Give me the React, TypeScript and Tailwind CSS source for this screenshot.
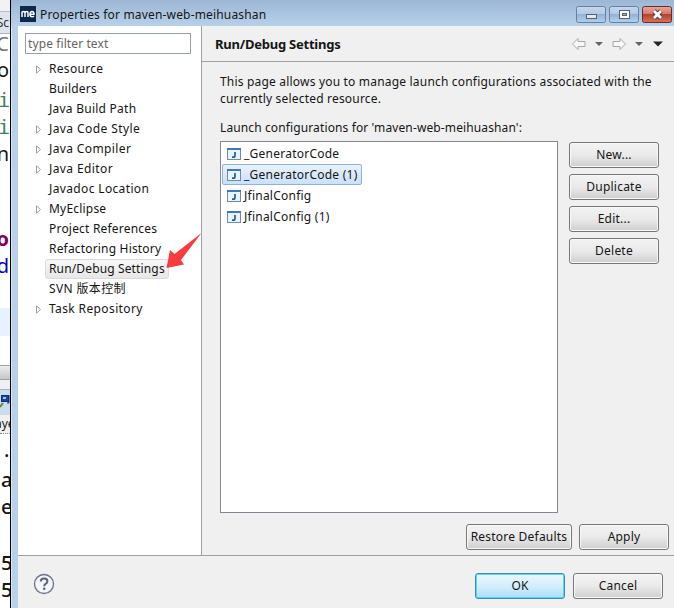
import type { ReactNode } from 'react';

type Node = { label: string; expandable?: boolean; selected?: boolean; tracking: string };

const nodes: Node[] = [
  { label: 'Resource', expandable: true, tracking: 'tracking-[0.3px]' },
  { label: 'Builders', tracking: 'tracking-[0.2px]' },
  { label: 'Java Build Path', tracking: 'tracking-[0.25px]' },
  { label: 'Java Code Style', expandable: true, tracking: 'tracking-[0.42px]' },
  { label: 'Java Compiler', expandable: true, tracking: 'tracking-[0.38px]' },
  { label: 'Java Editor', expandable: true, tracking: 'tracking-[0.4px]' },
  { label: 'Javadoc Location', tracking: 'tracking-[0.36px]' },
  { label: 'MyEclipse', expandable: true, tracking: 'tracking-[0.2px]' },
  { label: 'Project References', tracking: 'tracking-[0.2px]' },
  { label: 'Refactoring History', tracking: 'tracking-[0.18px]' },
  { label: 'Run/Debug Settings', selected: true, tracking: 'tracking-[0.14px]' },
  { label: 'SVN 版本控制', tracking: 'tracking-[0.35px]' },
  { label: 'Task Repository', expandable: true, tracking: 'tracking-[0.38px]' },
];

const configs = ['_GeneratorCode', '_GeneratorCode (1)', 'JfinalConfig', 'JfinalConfig (1)'];

function Button({ children, className = 'w-[90px]', primary = false }: { children: ReactNode; className?: string; primary?: boolean }) {
  const look = primary
    ? 'border-[#3c8ab3] from-[#eaf7fd] via-[#d2effc] to-[#a9def5] shadow-[inset_0_0_0_1px_#5fd2f5]'
    : 'border-[#777777] from-[#f3f3f3] via-[#eaeaea] to-[#cfcfcf] shadow-[inset_0_0_0_1px_#f9f9f9]';
  return (
    <button className={`flex h-[26px] shrink-0 items-center justify-center whitespace-nowrap rounded-[3px] border bg-linear-to-b tracking-[0.22px] ${look} ${className}`}>
      {children}
    </button>
  );
}

function JavaIcon() {
  return (
    <svg width="14" height="12" viewBox="0 0 14 12" className="shrink-0">
      <rect x="0.5" y="0.5" width="13" height="11" fill="#e9f5fc" stroke="#6d8cb4" />
      <rect x="0" y="0" width="14" height="2" fill="#3f78bd" />
      <path d="M8 4v3.500q0 1.700-1.700 1.700H5" fill="none" stroke="#245c99" strokeWidth="1.700" />
    </svg>
  );
}

function Background() {
  return (
    <div className="h-full w-[10px] shrink-0 overflow-hidden bg-white font-['Noto_Sans',sans-serif] text-[20px]">
      <div className="h-[12px] border-b border-[#b5bcc5] bg-[#f0f2f5]" />
      <div className="flex h-[22px] items-center justify-end border-b border-[#aab4c0] bg-[#dfe5ee] pr-[1px] text-[12px] text-[#333333]">Sc</div>
      <div className="flex h-[19px] items-center justify-end pr-[1px] text-[#777777]">C</div>
      <div className="flex h-[33px] items-center justify-end pr-[1px]">o</div>
      <div className="flex h-[27px] items-center justify-end font-['DejaVu_Sans_Mono',monospace] text-[#3f7f5f]">i</div>
      <div className="flex h-[28px] items-center justify-end font-['DejaVu_Sans_Mono',monospace] text-[#3f7f5f]">i</div>
      <div className="flex h-[25px] items-center justify-end pr-[1px]">n</div>
      <div className="h-[60px]" />
      <div className="flex h-[26px] items-center justify-end pr-[1px] font-bold text-[#7f0055]">o</div>
      <div className="flex h-[28px] items-center justify-end pr-[1px] text-[#0000c0]">d</div>
      <div className="h-[28px]" />
      <div className="h-[28px] bg-[#e8f2fe]" />
      <div className="h-[29px]" />
      <div className="h-[15px] border-y border-[#a2a2a2] bg-linear-to-b from-[#eeeeee] to-[#c6c6c6]" />
      <div className="h-[10px] border-b border-[#a9b6c6] bg-[#f0f0f0]" />
      <div className="flex h-[25px] justify-end bg-[#cbdceb]">
        <svg width="10" height="25" viewBox="0 0 10 25">
          <rect x="1.500" y="5.500" width="7" height="6" fill="#1843a8" stroke="#102c75" />
          <rect x="3" y="7" width="3" height="2" fill="#9ac4f0" />
          <path d="M9 5v8H7" stroke="#102c75" fill="none" />
          <path d="M0 17l3-4" stroke="#66843f" strokeWidth="2" />
        </svg>
      </div>
      <div className="flex h-[19px] items-center border-b border-dotted border-[#888888] bg-[#f0f0f0] text-[12px]">
        <span className="-ml-[5px]">aye</span>
      </div>
      <div className="flex h-[32px] items-center pl-[4px] font-medium">.</div>
      <div className="flex h-[27px] items-center pl-[1px] font-medium">a</div>
      <div className="flex h-[27px] items-center pl-[1px] font-medium">e</div>
      <div className="h-[29px]" />
      <div className="flex h-[27px] items-center pl-[1px] font-medium">5</div>
      <div className="flex h-[28px] items-center pl-[1px] font-medium">5</div>
    </div>
  );
}

function TitleBar() {
  return (
    <header className="flex h-[26px] shrink-0 items-start justify-between bg-linear-to-b from-[#9cb7d5] to-[#b8d0e9] pl-[9px] pr-px">
      <div className="flex items-start pt-[6px]">
        <svg width="16" height="16" viewBox="0 0 16 16" className="shrink-0">
          <rect width="16" height="16" fill="#0c2a4c" />
          <path d="M2 11V6.500q0-1 1.400-1T5 6.500V11M5 6.500q.2-1 1.600-1T8 6.500V11M10 8.300h4q0-2.800-2-2.800t-2 2.800q0 2.400 2 2.400 1.300 0 2-.8" fill="none" stroke="#fff" strokeWidth="1.500" />
        </svg>
        <h1 className="ml-[4px] mt-px h-[16px] whitespace-nowrap leading-[16px] tracking-[0.17px]">Properties for maven-web-meihuashan</h1>
      </div>
      <svg width="98" height="18" viewBox="0 0 98 18" className="mt-[6px]">
        <defs>
          <linearGradient id="glass" x2="0" y2="1"><stop stopColor="#c4d8ed" /><stop offset=".48" stopColor="#b3cae3" /><stop offset=".5" stopColor="#94b3d4" /><stop offset="1" stopColor="#b3d0ec" /></linearGradient>
          <linearGradient id="close" x2="0" y2="1"><stop stopColor="#e5a99b" /><stop offset=".46" stopColor="#d17c6c" /><stop offset=".5" stopColor="#bb3f2a" /><stop offset="1" stopColor="#d8745a" /></linearGradient>
        </defs>
        <rect x="1.500" y="0.500" width="29" height="16" rx="2" fill="url(#glass)" stroke="#6580a0" />
        <rect x="34.500" y="0.500" width="29" height="16" rx="2" fill="url(#glass)" stroke="#6580a0" />
        <rect x="67.500" y="0.500" width="29" height="16" rx="2" fill="url(#close)" stroke="#672b2a" />
        <rect x="11.500" y="8.500" width="10" height="4" fill="#dfe8f3" stroke="#536175" />
        <rect x="44.500" y="4.500" width="10" height="8" fill="#f7f9fc" stroke="#536175" />
        <rect x="47.500" y="7.500" width="4" height="2" fill="#94b3d4" stroke="#536175" />
        <path d="M79 5l7 7m0-7l-7 7" stroke="#633b40" strokeWidth="4.600" />
        <path d="M79 5l7 7m0-7l-7 7" stroke="#fff" strokeWidth="2.800" />
      </svg>
    </header>
  );
}

function Sidebar() {
  return (
    <aside className="w-[184px] shrink-0 border-r border-[#a0a0a0] bg-white pt-[7px]">
      <div className="ml-[7px] flex h-[21px] w-[166px] items-center border border-[#999fa6] pl-[2px] tracking-[0.1px] text-[#646464]">type filter text</div>
      <ul className="relative mt-[5px]">
        {nodes.map((n) => (
          <li key={n.label} className="flex h-[20px] items-center pl-[17px]">
            <svg width="7" height="9" viewBox="0 0 7 9" className={n.expandable ? 'shrink-0' : 'invisible shrink-0'}>
              <path d="M1.500.8v7.400L5.500 4.500z" fill="#fff" stroke="#a0a0a0" />
            </svg>
            <span className={`ml-[3px] flex h-[20px] items-center whitespace-nowrap rounded-[3px] border px-[3px] ${n.tracking} ${n.selected ? 'border-[#d9d9d9] bg-linear-to-b from-[#f8f8f8] to-[#e7e7e7]' : 'border-transparent'}`}>
              {n.label}
            </span>
          </li>
        ))}
        <svg width="37" height="36" viewBox="0 0 37 36" className="absolute left-[147px] top-[174px]">
          <path d="M36.500 0L16 27l3 4.500L1.500 35 5 17l4.500 4z" fill="#f83b3d" />
        </svg>
      </ul>
    </aside>
  );
}

function NavArrows() {
  return (
    <svg width="94" height="14" viewBox="0 0 94 14" className="mr-[9px]">
      <path d="M1.500 7L7 1.500v3h7v5H7v3z" fill="#f8f8f8" stroke="#a8a8a8" />
      <path d="M24 5h8l-4 4z" fill="#666666" />
      <path d="M54.500 7L49 1.500v3h-7v5h7v3z" fill="#f8f8f8" stroke="#a8a8a8" />
      <path d="M64 5h8l-4 4z" fill="#666666" />
      <path d="M82 4.500h10l-5 5z" fill="#252525" />
    </svg>
  );
}

export default function App() {
  return (
    <div className="flex h-[608px] w-[674px] overflow-hidden bg-white font-['Noto_Sans','Noto_Sans_CJK_SC',sans-serif] text-[12px] text-[#151515]">
      <Background />
      <div className="flex min-w-0 grow flex-col border-l border-black">
        <TitleBar />
        <div className="flex min-h-0 grow">
          <div className="w-[7px] shrink-0 border-l border-[#dce8f4] bg-[#b8d0e9]" />
          <div className="flex min-w-0 grow flex-col bg-[#f0f0f0]">
            <div className="flex h-[530px] border-b border-[#a0a0a0]">
              <Sidebar />
              <main className="flex min-w-0 grow flex-col">
                <div className="flex h-[36px] shrink-0 items-center justify-between border-b border-[#a0a0a0] pl-[13px]">
                  <h2 className="mt-[2px] whitespace-nowrap text-[13px] font-bold tracking-[-0.23px]">Run/Debug Settings</h2>
                  <NavArrows />
                </div>
                <p className="mt-[11px] pl-[18px] leading-[17px] tracking-[0.19px]">
                  This page allows you to manage launch configurations associated with the<br />currently selected resource.
                </p>
                <p className="mt-[12px] pl-[18px] leading-[17px] tracking-[0.12px]">Launch configurations for 'maven-web-meihuashan':</p>
                <div className="mt-[5px] flex gap-[11px] pl-[18px]">
                  <ul className="h-[372px] w-[338px] shrink-0 border border-[#828790] bg-white pl-px pt-px">
                    {configs.map((c, i) => (
                      <li key={c} className={`flex h-[21px] w-fit items-center gap-[3px] whitespace-nowrap rounded-[2px] border pl-[4px] pr-[3px] tracking-[0.24px] ${i === 1 ? 'border-[#8fb2dc] bg-linear-to-b from-[#e9f2fd] to-[#cbe0fa]' : 'border-transparent'}`}>
                        <JavaIcon />
                        <span>{c}</span>
                      </li>
                    ))}
                  </ul>
                  <div className="flex flex-col gap-[6px] pt-px">
                    <Button>New...</Button>
                    <Button>Duplicate</Button>
                    <Button>Edit...</Button>
                    <Button>Delete</Button>
                  </div>
                </div>
                <div className="mt-[11px] flex justify-end gap-[7px] pr-[5px]">
                  <Button className="w-[106px]">Restore Defaults</Button>
                  <Button>Apply</Button>
                </div>
              </main>
            </div>
            <footer className="flex grow items-center justify-between pl-[15px] pr-[11px] pt-[7px]">
              <svg width="22" height="22" viewBox="0 0 22 22" className="-mt-[4px]">
                <circle cx="11" cy="11" r="9.500" fill="#f3f6fb" stroke="#6a718b" strokeWidth="1.300" />
                <path d="M7.800 8.500q0-3 3.300-3 3.300 0 3.300 2.700 0 1.500-1.800 2.600-1.400.9-1.400 2.400" fill="none" stroke="#5a627f" strokeWidth="2" />
                <circle cx="11.200" cy="15.800" r="1.300" fill="#5a627f" />
              </svg>
              <div className="flex gap-[8px]">
                <Button primary>OK</Button>
                <Button>Cancel</Button>
              </div>
            </footer>
          </div>
        </div>
      </div>
    </div>
  );
}
